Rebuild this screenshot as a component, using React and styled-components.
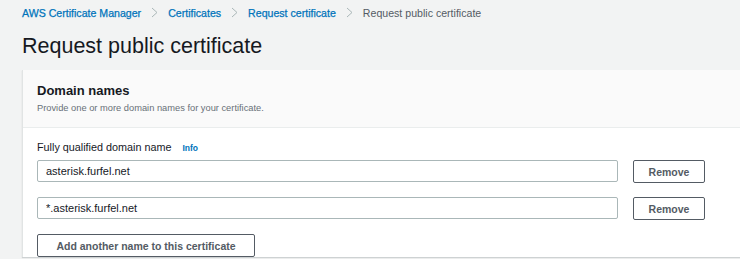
import React from 'react';
import styled, { createGlobalStyle } from 'styled-components';

const GlobalStyle = createGlobalStyle`
  html, body {
    margin: 0;
    padding: 0;
    background: #f2f3f3;
    overflow: hidden;
  }
  body {
    font-family: 'Liberation Sans', Arial, sans-serif;
    color: #16191f;
  }
`;

const Page = styled.div`
  padding: 5px 0 0 22px;
  width: 740px;
  height: 259px;
  box-sizing: border-box;
`;

const Breadcrumbs = styled.nav`
  display: flex;
  align-items: center;
  gap: 10px;
  height: 15px;
  font-size: 10.6px;
`;

const Crumb = styled.a`
  color: ${(props) => (props.current ? '#545b64' : '#0073bb')};
  font-weight: 400;
  text-decoration: none;
  -webkit-text-stroke: ${(props) => (props.current ? '0' : '0.25px')};
`;

const Chevron = styled.svg`
  width: 7px;
  height: 11px;
  flex: none;
`;

const Title = styled.h1`
  margin: 13px 0 0;
  font-size: 21.5px;
  font-weight: 400;
  line-height: 26px;
  color: #16191f;
`;

const Card = styled.section`
  margin-top: 11px;
  margin-right: -4px;
  background: #fff;
  border-left: 1px solid #e1e4e4;
  box-shadow: 0 1px 1px 0 rgba(0, 28, 36, 0.15);
`;

const CardHeader = styled.header`
  background: #fafafa;
  border-bottom: 1px solid #eaeded;
  padding: 12px 14px 0;
  height: 58px;
  box-sizing: border-box;
`;

const CardTitle = styled.h2`
  margin: 0;
  font-size: 13px;
  font-weight: 700;
  line-height: 17px;
`;

const CardDescription = styled.p`
  margin: 3px 0 0;
  font-size: 9.3px;
  line-height: 12px;
  color: #687078;
`;

const CardBody = styled.div`
  padding: 12px 14px 0;
`;

const LabelRow = styled.div`
  display: flex;
  align-items: baseline;
  gap: 11px;
  font-size: 10.8px;
  line-height: 15px;
`;

const InfoLink = styled.a`
  color: #0073bb;
  font-size: 8.5px;
  font-weight: 700;
  text-decoration: none;
`;

const FieldRow = styled.div`
  display: grid;
  grid-template-columns: 581px 72px;
  gap: 15px;
  margin-top: ${(props) => props.gap || '0'};
`;

const TextInput = styled.input`
  height: 22px;
  box-sizing: border-box;
  border: 1px solid #aab7b8;
  border-radius: 2px;
  padding: 0 8px;
  font-family: inherit;
  font-size: 11px;
  color: #16191f;
  background: #fff;
  outline: none;
`;

const Button = styled.button`
  height: ${(props) => props.height || '23px'};
  width: ${(props) => props.width || 'auto'};
  box-sizing: border-box;
  border: 1px solid #545b64;
  border-radius: 2px;
  background: #fff;
  color: #545b64;
  font-family: inherit;
  font-size: 10.5px;
  font-weight: 700;
  padding: 0;
  cursor: pointer;
`;

const AddRow = styled.div`
  margin-top: 14px;
`;

const ChevronIcon = () => (
  <Chevron viewBox="0 0 7 11">
    <path d="M1 1l5 4.5L1 10" fill="none" stroke="#aab7b8" strokeWidth="1" />
  </Chevron>
);

const domains = ['asterisk.furfel.net', '*.asterisk.furfel.net'];

const App = () => (
  <>
    <GlobalStyle />
    <Page>
      <Breadcrumbs>
        <Crumb href="#">AWS Certificate Manager</Crumb>
        <ChevronIcon />
        <Crumb href="#">Certificates</Crumb>
        <ChevronIcon />
        <Crumb href="#">Request certificate</Crumb>
        <ChevronIcon />
        <Crumb current>Request public certificate</Crumb>
      </Breadcrumbs>
      <Title>Request public certificate</Title>
      <Card>
        <CardHeader>
          <CardTitle>Domain names</CardTitle>
          <CardDescription>Provide one or more domain names for your certificate.</CardDescription>
        </CardHeader>
        <CardBody>
          <LabelRow>
            <span>Fully qualified domain name</span>
            <InfoLink href="#">Info</InfoLink>
          </LabelRow>
          {domains.map((domain, i) => (
            <FieldRow key={domain} gap={i === 0 ? '4px' : '14px'}>
              <TextInput defaultValue={domain} />
              <Button>Remove</Button>
            </FieldRow>
          ))}
          <AddRow>
            <Button width="218px">Add another name to this certificate</Button>
          </AddRow>
        </CardBody>
      </Card>
    </Page>
  </>
);

export default App;
